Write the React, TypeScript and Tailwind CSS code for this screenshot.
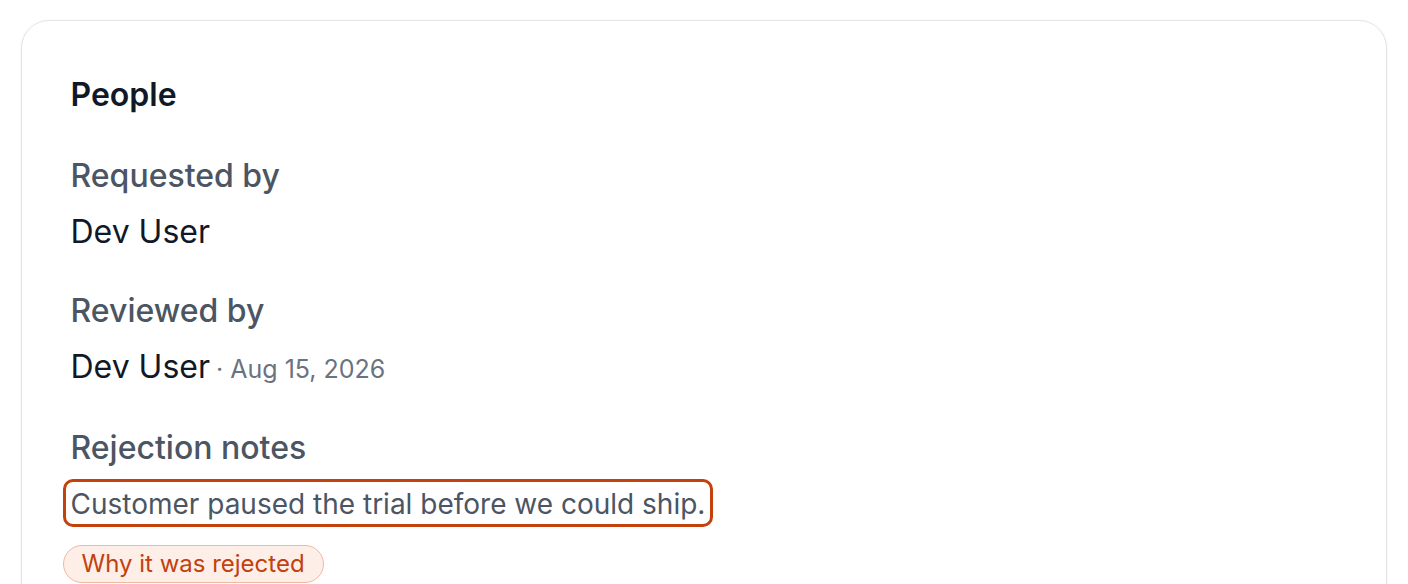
export default function App() {
  return (
    <div
      className="min-h-screen bg-white px-[21px] pt-[20px]"
      style={{ fontFamily: "Inter, 'Noto Sans', sans-serif" }}
    >
      <div className="min-h-[600px] rounded-[28px] border-[1.5px] border-[#e3e4e8] bg-white px-[48.5px] pt-[52px] shadow-[0_1px_3px_rgba(0,0,0,0.07)]">
        <h2 className="text-[32px] leading-[44px] font-semibold text-[#111827]">
          People
        </h2>

        <div className="mt-[37px] flex flex-col gap-[12px]">
          <div className="text-[32px] leading-[44px] font-medium text-[#4b5563]">
            Requested by
          </div>
          <div className="text-[32px] leading-[44px] text-[#111827]">Dev User</div>
        </div>

        <div className="mt-[35px] flex flex-col gap-[12px]">
          <div className="text-[32px] leading-[44px] font-medium text-[#4b5563]">
            Reviewed by
          </div>
          <div className="text-[32px] leading-[44px] text-[#111827]">
            Dev User
            <span className="ml-[6px] text-[25px] text-[#6b7280]">· Aug 15, 2026</span>
          </div>
        </div>

        <div className="mt-[35px] flex flex-col items-start">
          <div className="text-[32px] leading-[44px] font-medium text-[#4b5563]">
            Rejection notes
          </div>
          <div className="mt-[9px] -ml-[8px] rounded-[10px] border-[3px] border-[#c2410c] px-[5px] pt-[2px] text-[28px] leading-[40px] text-[#4b5563]">
            Customer paused the trial before we could ship.
          </div>
          <div className="mt-[18px] -ml-[8px] rounded-full border-[1.5px] border-[#f0b9a3] bg-[#fdeee8] px-[18px] py-[2px] text-[24px] leading-[32px] text-[#c2410c]">
            Why it was rejected
          </div>
        </div>
      </div>
    </div>
  );
}
